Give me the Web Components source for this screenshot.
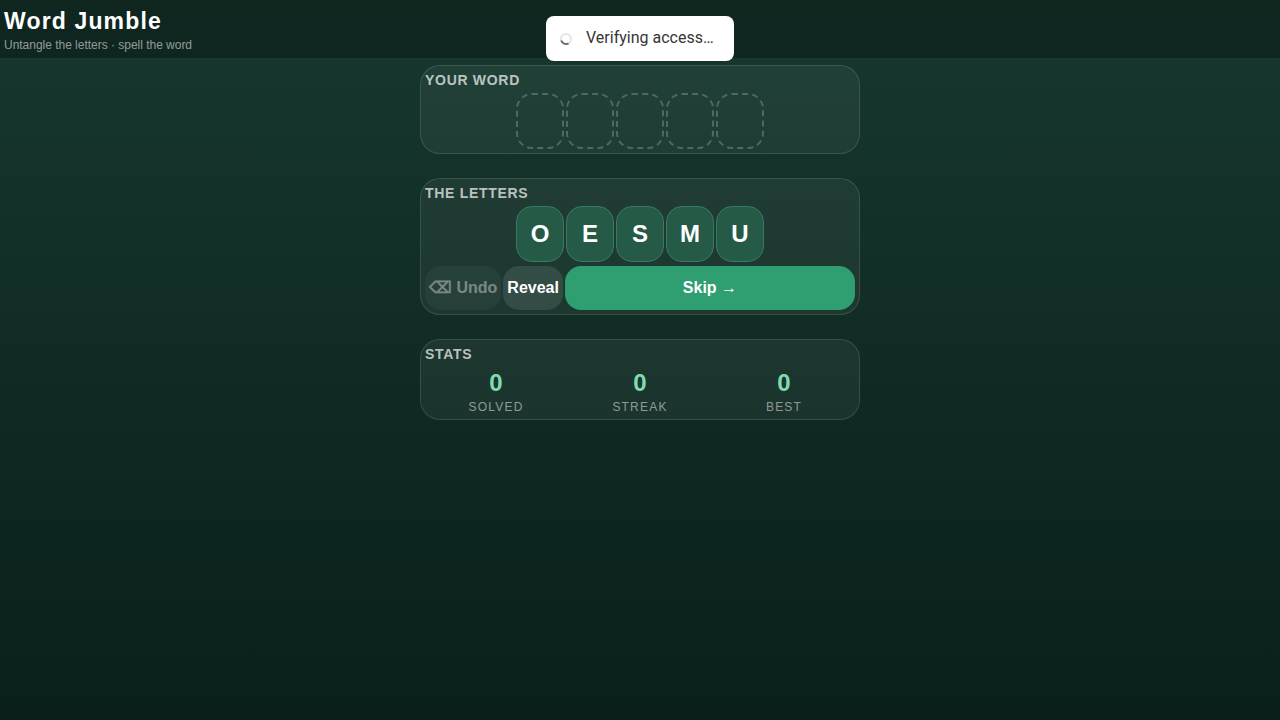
<!DOCTYPE html>
<html lang="en">
<head>
<meta charset="UTF-8">
<title>Word Jumble</title>
<style>
  html, body { height: 100%; }
  body {
    margin: 0;
    overflow: hidden;
    font-family: "Liberation Sans", Arial, sans-serif;
    background: linear-gradient(180deg, #17382f 0%, #0a1f1a 100%);
    color: #fff;
  }
</style>
</head>
<body>
<template id="t-header">
  <style>
    :host { display: block; height: 58px; box-sizing: content-box; padding: 0 4px; background: rgba(0,0,0,.3); border-bottom: 1px solid rgba(255,255,255,.08); }
    h1 { margin: 0; padding-top: 6px; font-size: 23px; line-height: 30px; font-weight: 700; letter-spacing: 1.15px; color: #fff; }
    p { margin: 1px 0 0; font-size: 12px; line-height: 16px; letter-spacing: -.02px; color: rgba(255,255,255,.55); }
  </style>
  <h1><slot name="title"></slot></h1>
  <p><slot name="sub"></slot></p>
</template>

<template id="t-toast">
  <style>
    :host { position: fixed; top: 16px; left: 546px; width: 188px; height: 45px; box-sizing: border-box; display: flex; align-items: center; padding: 0 0 2px 14px; gap: 14px; background: #fff; border-radius: 8px; color: #363636; font-family: Roboto, sans-serif; font-size: 16px; }
    svg { width: 12px; height: 12px; flex: none; margin-top: 2px; }
  </style>
  <svg viewBox="0 0 12 12"><circle cx="6" cy="6" r="5" fill="none" stroke="#e4e4e4" stroke-width="2"/><path d="M1.2 7.5A5 5 0 0 0 8.5 10.3" fill="none" stroke="#6f6f6f" stroke-width="2"/></svg>
  <slot></slot>
</template>

<template id="t-card">
  <style>
    :host { display: flex; flex-direction: column; gap: 4px; box-sizing: border-box; padding: 4px; background: rgba(255,255,255,.05); border: 1px solid rgba(255,255,255,.12); border-radius: 20px; }
    .label { font-size: 14px; line-height: 19px; padding-top: 1px; margin-bottom: -1px; font-weight: 700; letter-spacing: .7px; text-transform: uppercase; color: rgba(255,255,255,.7); }
  </style>
  <div class="label"><slot name="label"></slot></div>
  <slot></slot>
</template>

<template id="t-tiles">
  <style>
    :host { display: flex; justify-content: center; gap: 2px; }
  </style>
  <slot></slot>
</template>

<template id="t-tile">
  <style>
    :host { display: flex; align-items: center; justify-content: center; box-sizing: border-box; width: 48px; height: 56px; border-radius: 16px; font-size: 24px; font-weight: 700; color: #fff; background: #245a46; border: 1px solid #3a7a62; }
    :host([empty]) { background: transparent; border: 2px dashed rgba(255,255,255,.22); }
  </style>
  <slot></slot>
</template>

<template id="t-btn">
  <style>
    :host { display: flex; align-items: center; justify-content: center; box-sizing: border-box; height: 44px; padding: 0 4px; border-radius: 16px; font-size: 16px; line-height: 18px; font-weight: 700; color: #fff; background: rgba(255,255,255,.1); white-space: nowrap; }
    :host([primary]) { flex: 1; background: #2f9e70; }
    :host([disabled]) { opacity: .4; }
  </style>
  <slot></slot>
</template>

<template id="t-stat">
  <style>
    :host { flex: 1 1 0; display: block; text-align: center; }
    .v { font-size: 24px; line-height: 32px; font-weight: 700; color: #7fdcb0; }
    .k { font-size: 12px; line-height: 16px; letter-spacing: 1.2px; text-transform: uppercase; color: rgba(255,255,255,.5); }
  </style>
  <div class="v"><slot name="value"></slot></div>
  <div class="k"><slot name="key"></slot></div>
</template>

<template id="t-app">
  <style>
    :host { display: block; }
    main { width: 440px; margin: 6px auto 0; display: flex; flex-direction: column; gap: 24px; }
  </style>
  <slot name="header"></slot>
  <main><slot></slot></main>
</template>

<wj-app>
  <wj-header slot="header">
    <span slot="title">Word Jumble</span>
    <span slot="sub">Untangle the letters · spell the word</span>
  </wj-header>

  <wj-card>
    <span slot="label">Your word</span>
    <wj-tiles>
      <wj-tile empty></wj-tile><wj-tile empty></wj-tile><wj-tile empty></wj-tile><wj-tile empty></wj-tile><wj-tile empty></wj-tile>
    </wj-tiles>
  </wj-card>

  <wj-card>
    <span slot="label">The letters</span>
    <wj-tiles>
      <wj-tile>O</wj-tile><wj-tile>E</wj-tile><wj-tile>S</wj-tile><wj-tile>M</wj-tile><wj-tile>U</wj-tile>
    </wj-tiles>
    <wj-tiles>
      <wj-btn disabled>⌫ Undo</wj-btn>
      <wj-btn>Reveal</wj-btn>
      <wj-btn primary>Skip →</wj-btn>
    </wj-tiles>
  </wj-card>

  <wj-card>
    <span slot="label">Stats</span>
    <wj-tiles>
      <wj-stat><span slot="value">0</span><span slot="key">Solved</span></wj-stat>
      <wj-stat><span slot="value">0</span><span slot="key">Streak</span></wj-stat>
      <wj-stat><span slot="value">0</span><span slot="key">Best</span></wj-stat>
    </wj-tiles>
  </wj-card>
</wj-app>

<wj-toast>Verifying access…</wj-toast>

<script>
  // every element is just its template in an open shadow root
  const tags = {
    'wj-app': 't-app',
    'wj-header': 't-header',
    'wj-toast': 't-toast',
    'wj-card': 't-card',
    'wj-tiles': 't-tiles',
    'wj-tile': 't-tile',
    'wj-btn': 't-btn',
    'wj-stat': 't-stat'
  };

  Object.keys(tags).forEach(name => {
    customElements.define(name, class extends HTMLElement {
      constructor() {
        super();
        const template = document.getElementById(tags[name]);
        this.attachShadow({mode: 'open'}).appendChild(document.importNode(template.content, true));
      }
    });
  });
</script>
</body>
</html>
